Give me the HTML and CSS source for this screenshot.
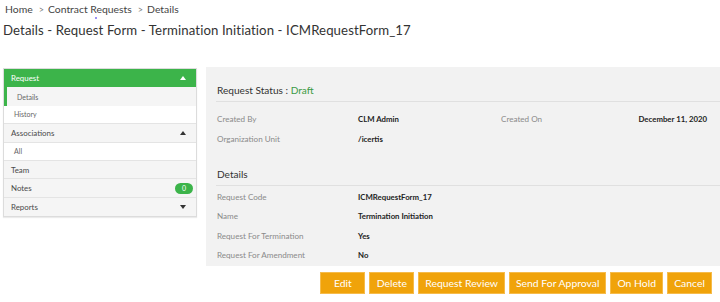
FILE: index.html
```html
<!DOCTYPE html>
<html>
<head>
<meta charset="utf-8">
<link rel="stylesheet" href="styles.css">
</head>
<body>
<div class="breadcrumb">
  <span class="crumb">Home</span>
  <span class="sep">&gt;</span>
  <span class="crumb">Contract Requests<i class="dot"></i></span>
  <span class="sep">&gt;</span>
  <span class="crumb">Details</span>
</div>
<h1 class="title">Details - Request Form - Termination Initiation - ICMRequestForm_17</h1>

<div class="content">
  <nav class="sidebar">
    <div class="nav-row head active-head"><span>Request</span><span class="caret up white"></span></div>
    <div class="nav-row sub selected">Details</div>
    <div class="nav-row sub white-bg">History</div>
    <div class="nav-row head"><span>Associations</span><span class="caret up"></span></div>
    <div class="nav-row sub white-bg">All</div>
    <div class="nav-row head"><span>Team</span></div>
    <div class="nav-row head"><span>Notes</span><span class="badge">0</span></div>
    <div class="nav-row head last"><span>Reports</span><span class="caret down"></span></div>
  </nav>

  <div class="right">
    <main class="panel">
      <div class="section-head">Request Status : <span class="green">Draft</span></div>
      <div class="fields">
        <div class="row">
          <span class="label">Created By</span>
          <span class="value">CLM Admin</span>
          <span class="label">Created On</span>
          <span class="value end">December 11, 2020</span>
        </div>
        <div class="row">
          <span class="label">Organization Unit</span>
          <span class="value">/icertis</span>
        </div>
      </div>
      <div class="section-head second">Details</div>
      <div class="fields tight">
        <div class="row"><span class="label">Request Code</span><span class="value">ICMRequestForm_17</span></div>
        <div class="row"><span class="label">Name</span><span class="value">Termination Initiation</span></div>
        <div class="row"><span class="label">Request For Termination</span><span class="value">Yes</span></div>
        <div class="row"><span class="label">Request For Amendment</span><span class="value">No</span></div>
      </div>
    </main>
    <div class="actions">
      <button class="btn">Edit</button>
      <button class="btn">Delete</button>
      <button class="btn">Request Review</button>
      <button class="btn">Send For Approval</button>
      <button class="btn">On Hold</button>
      <button class="btn">Cancel</button>
    </div>
  </div>
</div>
</body>
</html>
```

FILE: styles.css
```css
* { box-sizing: border-box; }
html, body { margin: 0; padding: 0; background: #fff; }
body {
  font-family: Lato, "Open Sans", sans-serif;
  color: #333;
  width: 720px;
  height: 302px;
  overflow: hidden;
}
.breadcrumb {
  height: 17px;
  padding: 1px 0 0 5px;
  font-size: 10.4px;
  color: #444;
  display: flex;
  align-items: center;
  gap: 4px;
}
.breadcrumb .sep { color: #7a7a7a; font-size: 9px; margin-left: 2px; }
.crumb { position: relative; }
.dot {
  position: absolute;
  left: 47px;
  top: 14px;
  width: 2px;
  height: 2px;
  border-radius: 1px;
  background: #7b6cf0;
}
.title {
  margin: 4px 0 0 3px;
  font-size: 13.2px;
  font-weight: 400;
  color: #333;
  line-height: 18px;
  letter-spacing: 0.1px;
}
.content {
  display: flex;
  margin-top: 28px;
  padding-left: 3px;
  gap: 9px;
}
.sidebar {
  width: 194px;
  align-self: flex-start;
  border: 1px solid #dcdcdc;
  box-shadow: 0 1px 1px rgba(0,0,0,0.08);
  margin-top: 1px;
}
.nav-row {
  height: 18.4px;
  display: flex;
  align-items: center;
  justify-content: space-between;
  padding: 0 8px 0 7px;
  background: #f5f5f5;
  border-bottom: 1px solid #e4e4e4;
  font-size: 7.9px;
  color: #4a4a4a;
}
.nav-row.last { border-bottom: none; }
.active-head {
  background: #3cb44a;
  color: #fff;
  border-bottom: none;
}
.sub {
  font-size: 7px;
  color: #666;
  padding-left: 10px;
}
.selected {
  border-left: 3px solid #3cb44a;
  padding-left: 10px;
  border-bottom: none;
}
.white-bg { background: #fff; }
.caret {
  width: 0; height: 0;
  border-left: 3px solid transparent;
  border-right: 3px solid transparent;
  margin-right: 2px;
}
.caret.up { border-bottom: 4px solid #333; }
.caret.up.white { border-bottom-color: #fff; }
.caret.down { border-top: 4px solid #333; }
.badge {
  background: #3cb44a;
  color: #fff;
  font-size: 7px;
  min-width: 18px;
  height: 11px;
  border-radius: 6px;
  display: flex;
  align-items: center;
  justify-content: center;
  margin-right: -5px;
}
.right {
  flex: 1;
  display: flex;
  flex-direction: column;
}
.panel {
  background: #f2f2f2;
  height: 199px;
  padding: 16px 0 0 10px;
}
.section-head {
  font-size: 10.1px;
  color: #333;
  height: 19px;
  line-height: 15px;
  border-bottom: 1px solid #e0e0e0;
  padding-left: 1px;
}
.section-head.second { margin-top: 18px; height: 19px; line-height: 15px; }
.green { color: #3a9a44; }
.fields { padding-top: 7px; }
.fields .row {
  display: grid;
  grid-template-columns: 141px 143px 1fr auto;
  height: 20px;
  align-items: center;
  padding-left: 1px;
  padding-right: 13px;
}
.fields.tight { padding-top: 1px; }
.fields.tight .row { height: 19.5px; }
.label { color: #8a8a8a; font-size: 8.1px; }
.value { color: #222; font-weight: 700; font-size: 7.8px; }
.actions {
  display: flex;
  justify-content: flex-end;
  gap: 4px;
  padding: 6px 8px 0 0;
}
.btn {
  font-family: Lato, "Open Sans", sans-serif;
  background: #f0a30a;
  border: 1px solid #f6bb4a;
  color: #fff;
  font-size: 10.4px;
  height: 22px;
  min-width: 45px;
  padding: 0 6px;
  cursor: pointer;
}
```
